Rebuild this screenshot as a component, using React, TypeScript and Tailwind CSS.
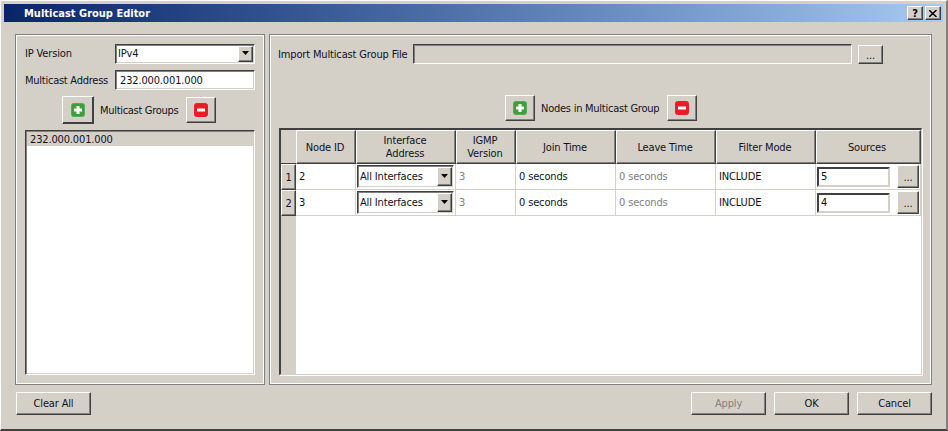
import React from "react";

const raised = "bg-[#d4d0c8] border border-t-white border-l-white border-r-[#404040] border-b-[#404040] shadow-[inset_-1px_-1px_0_#808080]";
const sunken = "border border-t-[#404040] border-l-[#404040] border-r-white border-b-white shadow-[inset_1px_1px_0_#808080,inset_-1px_-1px_0_#d4d0c8]";
const sunkenLight = "border-2 border-t-[#404040] border-l-[#404040] border-r-[#d4d0c8] border-b-[#d4d0c8]";
const tableFrame = "border-t-2 border-l-2 border-r border-b border-t-[#404040] border-l-[#404040] border-r-[#d4d0c8] border-b-[#d4d0c8] shadow-[1px_1px_0_#ffffff]";
const group = "border border-[#808080] shadow-[inset_0_0_0_1px_#ffffff]";

function Arrow() {
  return (
    <svg width="8" height="5" viewBox="0 0 8 5"><path d="M0 0h7L3.5 4z" fill="#000" /></svg>
  );
}

function Combo({ text, className }: { text: string; className: string }) {
  return (
    <div className={`${sunken} ${className} bg-white flex items-center p-[1px]`}>
      <span className="flex-1 pl-[1px]">{text}</span>
      <span className={`${raised} w-[15px] self-stretch flex items-center justify-center`}><Arrow /></span>
    </div>
  );
}

function IconBtn({ kind, className }: { kind: "add" | "del"; className: string }) {
  const add = kind === "add";
  return (
    <button className={`${raised} ${className} flex items-center justify-center`}>
      <svg width="14" height="14" viewBox="0 0 14 14">
        <rect x="0.5" y="0.5" width="13" height="13" rx="2" fill={add ? "#3f9e37" : "#ec1c24"} stroke={add ? "#58ab50" : "#e8202a"} />
        {add ? <path d="M5.5 3h3v2.5H11v3H8.500v2.500h-3V8.500H3v-3h2.500z" fill="#fff" /> : <rect x="3" y="5.500" width="8" height="3" fill="#fff" />}
      </svg>
    </button>
  );
}

function Dots({ className }: { className: string }) {
  return <button className={`${raised} ${className} flex items-center justify-center leading-none pt-[2px]`}>...</button>;
}

function Btn({ text, disabled }: { text: string; disabled?: boolean }) {
  return (
    <button className={`${raised} w-[75px] h-[23px] flex items-center justify-center ${disabled ? "text-[#808080]" : ""}`}>{text}</button>
  );
}

const headers = ["Node ID", "Interface\nAddress", "IGMP\nVersion", "Join Time", "Leave Time", "Filter Mode", "Sources"];
const rows = [
  { n: "1", id: "2", src: "5" },
  { n: "2", id: "3", src: "4" },
];
const cols = "grid grid-cols-[15px_60px_100px_60px_100px_100px_100px_105px]";
const cell = "border-r border-b border-[#d4d0c8] flex items-center pl-[3px] bg-white";

export default function App() {
  return (
    <div className="w-[948px] h-[431px] bg-[#d4d0c8] text-[11px] leading-[13px] tracking-[-0.15px] text-[#10101c] font-['DejaVu_Sans',sans-serif] [font-stretch:condensed] flex flex-col overflow-hidden border border-b-2 border-r-2 border-t-white border-l-white border-r-[#808080] border-b-[#404040] p-[3px]">
      <div className="h-[18px] flex items-center pl-[20px] pr-[2px] bg-gradient-to-r from-[#0a246a] to-[#a6caf0] shrink-0">
        <span className="flex-1 text-white font-bold tracking-normal">Multicast Group Editor</span>
        <button className={`${raised} w-[16px] h-[14px] flex items-center justify-center font-bold text-[11px] text-black`}>?</button>
        <button className={`${raised} w-[16px] h-[14px] ml-[2px] flex items-center justify-center`}>
          <svg width="8" height="7" viewBox="0 0 8 7"><path d="M0 0l7.500 7M7.500 0L0 7" stroke="#000" strokeWidth="1.500" /></svg>
        </button>
      </div>
      <div className="flex gap-[4px] px-[11px] pt-[12px] h-[362px] shrink-0">
        <section className={`${group} w-[250px] h-[351px] px-[9px] pt-[9px] flex flex-col`}>
          <div className="flex items-center h-[19px]">
            <span className="w-[90px]">IP Version</span>
            <Combo text="IPv4" className="w-[140px] h-[20px]" />
          </div>
          <div className="flex items-center h-[20px] mt-[7px]">
            <span className="w-[90px] whitespace-nowrap tracking-[-0.25px]">Multicast Address</span>
            <div className={`${sunken} w-[140px] h-[20px] bg-white flex items-center pl-[4px]`}>232.000.001.000</div>
          </div>
          <div className="flex items-center h-[28px] mt-[6px] pl-[37px]">
            <IconBtn kind="add" className="w-[32px] h-[28px] !shadow-[inset_-1px_-1px_0_#404040]" />
            <span className="ml-[6px] w-[86px] whitespace-nowrap tracking-[-0.3px]">Multicast Groups</span>
            <IconBtn kind="del" className="w-[30px] h-[26px]" />
          </div>
          <div className={`${sunken} w-[230px] h-[245px] mt-[6px] bg-white p-[1px]`}>
            <div className="bg-[#d4d0c8] h-[14px] pl-[3px] flex items-center">232.000.001.000</div>
          </div>
        </section>
        <section className={`${group} flex-1 h-[351px] pl-[8px] pt-[9px] flex flex-col`}>
          <div className="flex items-center h-[20px]">
            <span className="w-[135px] whitespace-nowrap">Import Multicast Group File</span>
            <div className={`${sunken} w-[439px] h-[20px]`} />
            <Dots className="w-[25px] h-[19px] ml-[6px]" />
          </div>
          <div className="flex items-center h-[26px] mt-[31px] pl-[227px]">
            <IconBtn kind="add" className="w-[30px] h-[26px]" />
            <span className="ml-[6px] w-[126px] whitespace-nowrap tracking-[-0.25px]">Nodes in Multicast Group</span>
            <IconBtn kind="del" className="w-[30px] h-[26px]" />
          </div>
          <div className={`${tableFrame} w-[643px] h-[247px] mt-[7px] ml-[1px] bg-white overflow-hidden`}>
            <div className={cols}>
              <div className="h-[34px] bg-[#d4d0c8] border-b border-[#404040]" />
              {headers.map((h) => (
                <div key={h} className={`${raised} h-[34px] flex items-center justify-center text-center whitespace-pre-line ${h === "Sources" ? "pr-[3px]" : "pr-[2px]"}`}>{h}</div>
              ))}
              {rows.map((r) => (
                <React.Fragment key={r.n}>
                  <div className={`${raised} h-[26px] flex items-center justify-center`}>{r.n}</div>
                  <div className={cell}>{r.id}</div>
                  <div className={`${cell} !pl-[1px]`}><Combo text="All Interfaces" className="w-[97px] h-[23px]" /></div>
                  <div className={`${cell} text-[#808080]`}>3</div>
                  <div className={cell}>0 seconds</div>
                  <div className={`${cell} text-[#808080]`}>0 seconds</div>
                  <div className={cell}>INCLUDE</div>
                  <div className={`${cell} !pl-[1px] gap-[7px]`}>
                    <div className={`${sunkenLight} w-[73px] h-[20px] flex items-center pl-[2px]`}>{r.src}</div>
                    <Dots className="w-[22px] h-[23px]" />
                  </div>
                </React.Fragment>
              ))}
            </div>
            <div className="w-[15px] h-[160px] bg-[#d4d0c8]" />
          </div>
        </section>
      </div>
      <div className="flex items-center gap-[8px] pl-[12px] pr-[11px] pt-[8px]">
        <Btn text="Clear All" />
        <div className="flex-1" />
        <Btn text="Apply" disabled />
        <Btn text="OK" />
        <Btn text="Cancel" />
      </div>
    </div>
  );
}
